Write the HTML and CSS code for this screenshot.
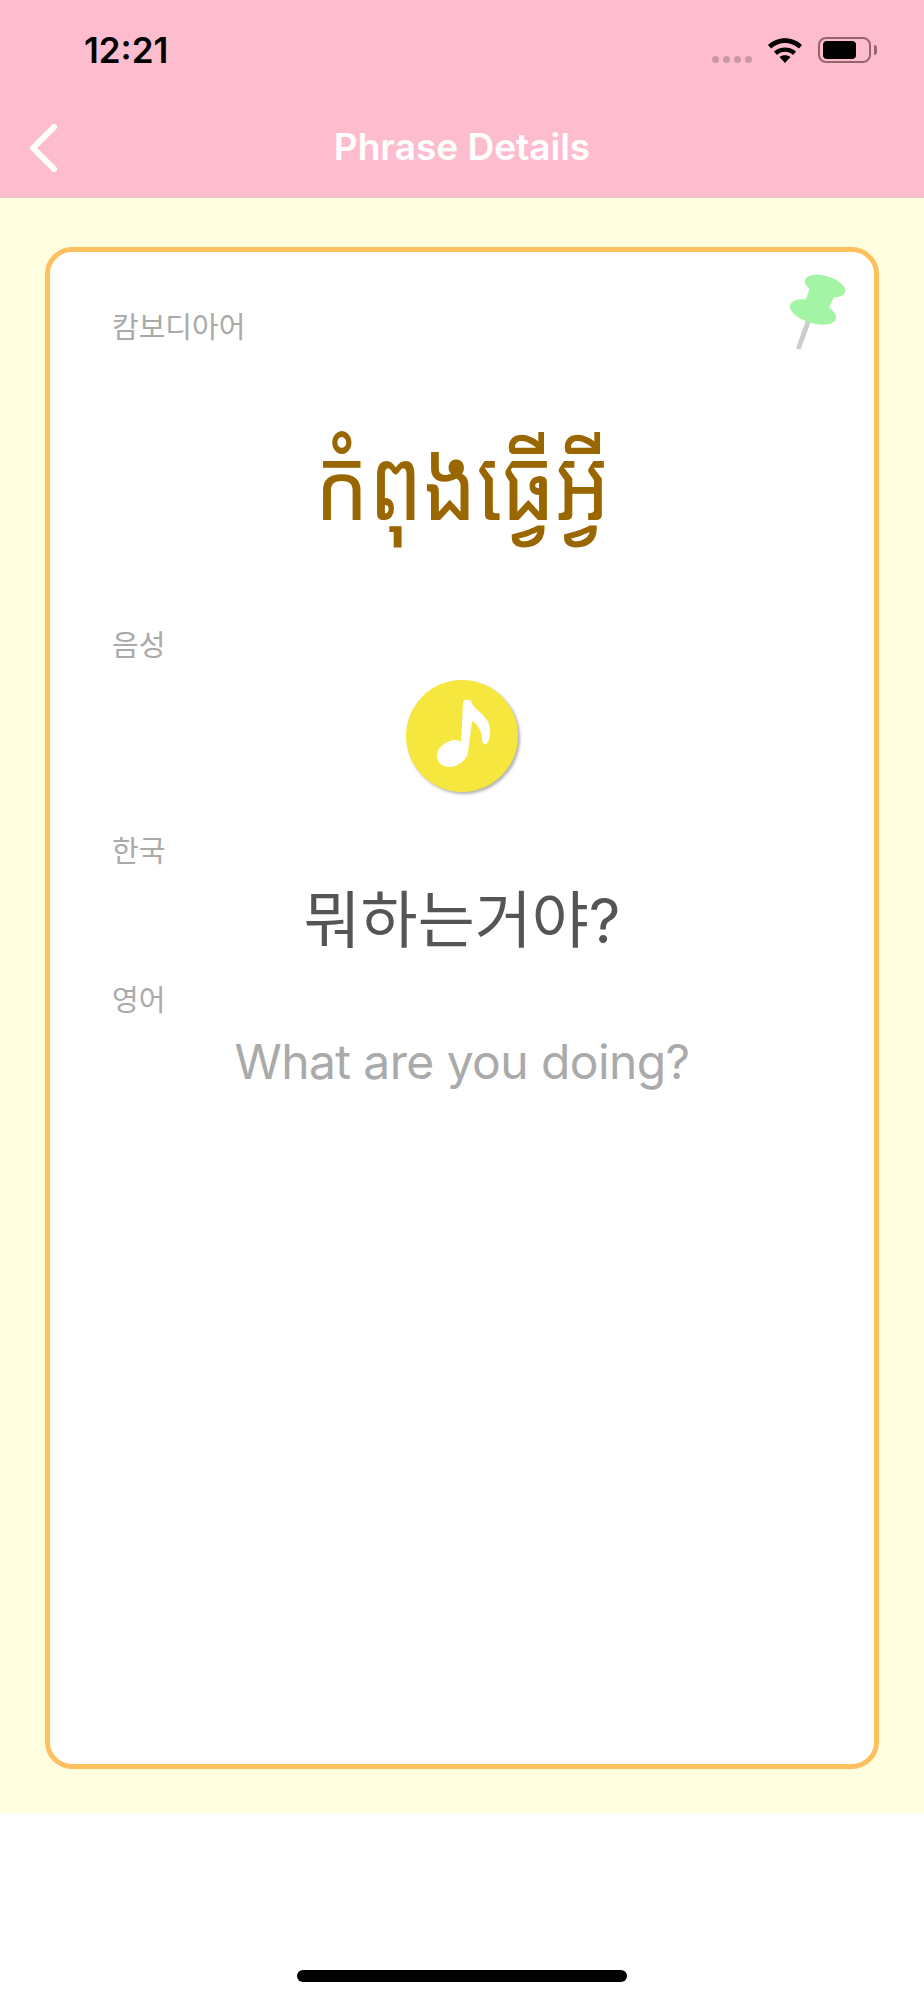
FILE: index.html
```html
<!DOCTYPE html>
<html lang="ko">
<head>
  <meta charset="UTF-8" />
  <title>Phrase Details</title>
  <link rel="stylesheet" href="styles.css">
</head>
<body>
  <div class="top">
    <div class="status">
      <span class="time">12:21</span>
      <div class="status-icons">
        <div class="dots"><i></i><i></i><i></i><i></i></div>
        <svg class="wifi" viewBox="0 0 36 26" width="36" height="26">
          <path d="M1 8 C10 -1 26 -1 35 8 L32 11.500 C24 4 12 4 4 11.500 Z"/>
          <path d="M7 14.500 C13 9 23 9 29 14.500 L26 18 C21.500 13.800 14.500 13.800 10 18 Z"/>
          <path d="M12.500 20 C15.500 17.500 20.500 17.500 23.500 20 L18 26 Z"/>
        </svg>
        <div class="battery"><div class="battery-fill"></div></div>
        <div class="battery-nub"></div>
      </div>
    </div>
    <div class="nav">
      <svg class="back" viewBox="0 0 30 48" width="30" height="48">
        <path d="M25 3 L4 24 L25 45" fill="none" stroke="#fff" stroke-width="6" stroke-linecap="round" stroke-linejoin="round"/>
      </svg>
      <span class="nav-title">Phrase Details</span>
    </div>
  </div>

  <div class="content">
    <div class="card">
      <svg class="pin" viewBox="0 0 70 84" width="70" height="84">
        <path d="M23 52 L14 77" stroke="#cdcdcd" stroke-width="5" stroke-linecap="round"/>
        <path d="M25 17 L50 25 L43 40 L20 32 Z" fill="#a3f5a5"/>
        <ellipse cx="40" cy="16" rx="21" ry="10" transform="rotate(17 40 16)" fill="#a3f5a5"/>
        <ellipse cx="28" cy="42" rx="24" ry="11" transform="rotate(17 28 42)" fill="#a3f5a5"/>
      </svg>

      <div class="label">캄보디아어</div>
      <div class="khmer">កំពុងធ្វើអ្វី</div>

      <div class="label label-voice">음성</div>
      <div class="play">
        <svg viewBox="0 0 112 112" width="112" height="112">
          <path fill="#fff" d="M57 23 C57 19 64 18 66 23 C69 31 84 36 84 50 C84 56 83 63 80 64 C77 65 76 62 76 59 C76 52 72 44 66 41 L62 72 C61 80 52 87 43 87 C35 87 31 81 31 76 C31 67 41 60 50 60 C52 60 54 61 55 62 Z"/>
        </svg>
      </div>

      <div class="label label-korean">한국</div>
      <div class="korean">뭐하는거야?</div>

      <div class="label label-english">영어</div>
      <div class="english">What are you doing?</div>
    </div>
  </div>

  <div class="bottom">
    <div class="home-bar"></div>
  </div>
</body>
</html>
```

FILE: styles.css
```css
* {
  box-sizing: border-box;
}
body {
  margin: 0;
  height: 2000px;
  display: flex;
  flex-direction: column;
  background: #fff;
  font-family: Inter, "Noto Sans CJK KR", sans-serif;
}
.top {
  background: #febdce;
  border-bottom: 1px solid #dcccc4;
}
.status {
  height: 88px;
  display: flex;
  justify-content: space-between;
  padding: 32px 47px 0 84px;
}
.time {
  font-size: 35px;
  font-weight: 600;
  line-height: 36px;
  color: #000;
}
.status-icons {
  display: flex;
  align-items: flex-start;
  padding-top: 5px;
}
.dots {
  display: flex;
  gap: 4px;
  margin-top: 19px;
  margin-right: 15px;
}
.dots i {
  width: 7px;
  height: 7px;
  border-radius: 50%;
  background: rgba(0, 0, 0, 0.2);
}
.wifi {
  fill: #000;
  margin-right: 15px;
}
.battery {
  width: 53px;
  height: 26px;
  border: 2px solid #96646e;
  border-radius: 8px;
  padding: 2px 3px;
}
.battery-fill {
  width: 33px;
  height: 18px;
  background: #000;
  border-radius: 4px;
}
.battery-nub {
  width: 3px;
  height: 10px;
  margin: 8px 0 0 3px;
  background: #96646e;
  border-radius: 0 3px 3px 0;
}
.nav {
  height: 109px;
  position: relative;
  display: flex;
  align-items: center;
  justify-content: center;
}
.back {
  position: absolute;
  left: 29px;
  top: 36px;
}
.nav-title {
  font-size: 37px;
  font-weight: 600;
  color: #fff;
  margin-top: 8px;
}
.content {
  height: 1615px;
  background: #ffffe0;
  padding: 49px 45px 44px 45px;
}
.card {
  position: relative;
  height: 100%;
  background: #fff;
  border: 5px solid #ffc05f;
  border-radius: 27px;
  padding: 57px 62px 0;
}
.pin {
  position: absolute;
  right: 19px;
  top: 18px;
}
.label {
  font-size: 29px;
  line-height: 38px;
  color: #aaa;
}
.khmer {
  margin-top: 46px;
  height: 176px;
  text-align: center;
  font-family: "Noto Sans Khmer", "Khmer OS", Inter, sans-serif;
  font-size: 100px;
  line-height: 176px;
  color: #996600;
  transform: scaleX(0.85);
}
.label-voice {
  margin-top: 58px;
}
.play {
  width: 112px;
  height: 112px;
  margin: 15px auto 0;
  border-radius: 50%;
  background: #f5e73e;
  box-shadow: 2px 2px 3px rgba(0, 0, 0, 0.3);
}
.label-korean {
  margin-top: 41px;
}
.korean {
  text-align: center;
  font-size: 62px;
  line-height: 72px;
  color: #555;
  margin-top: 14px;
}
.label-english {
  margin-top: 25px;
}
.english {
  text-align: center;
  font-size: 48px;
  letter-spacing: -0.6px;
  line-height: 60px;
  color: #aaa;
  margin-top: 12px;
}
.bottom {
  flex: 1;
  display: flex;
  justify-content: center;
  align-items: flex-end;
  padding-bottom: 18px;
}
.home-bar {
  width: 330px;
  height: 12px;
  background: #000;
  border-radius: 6px;
}
```
